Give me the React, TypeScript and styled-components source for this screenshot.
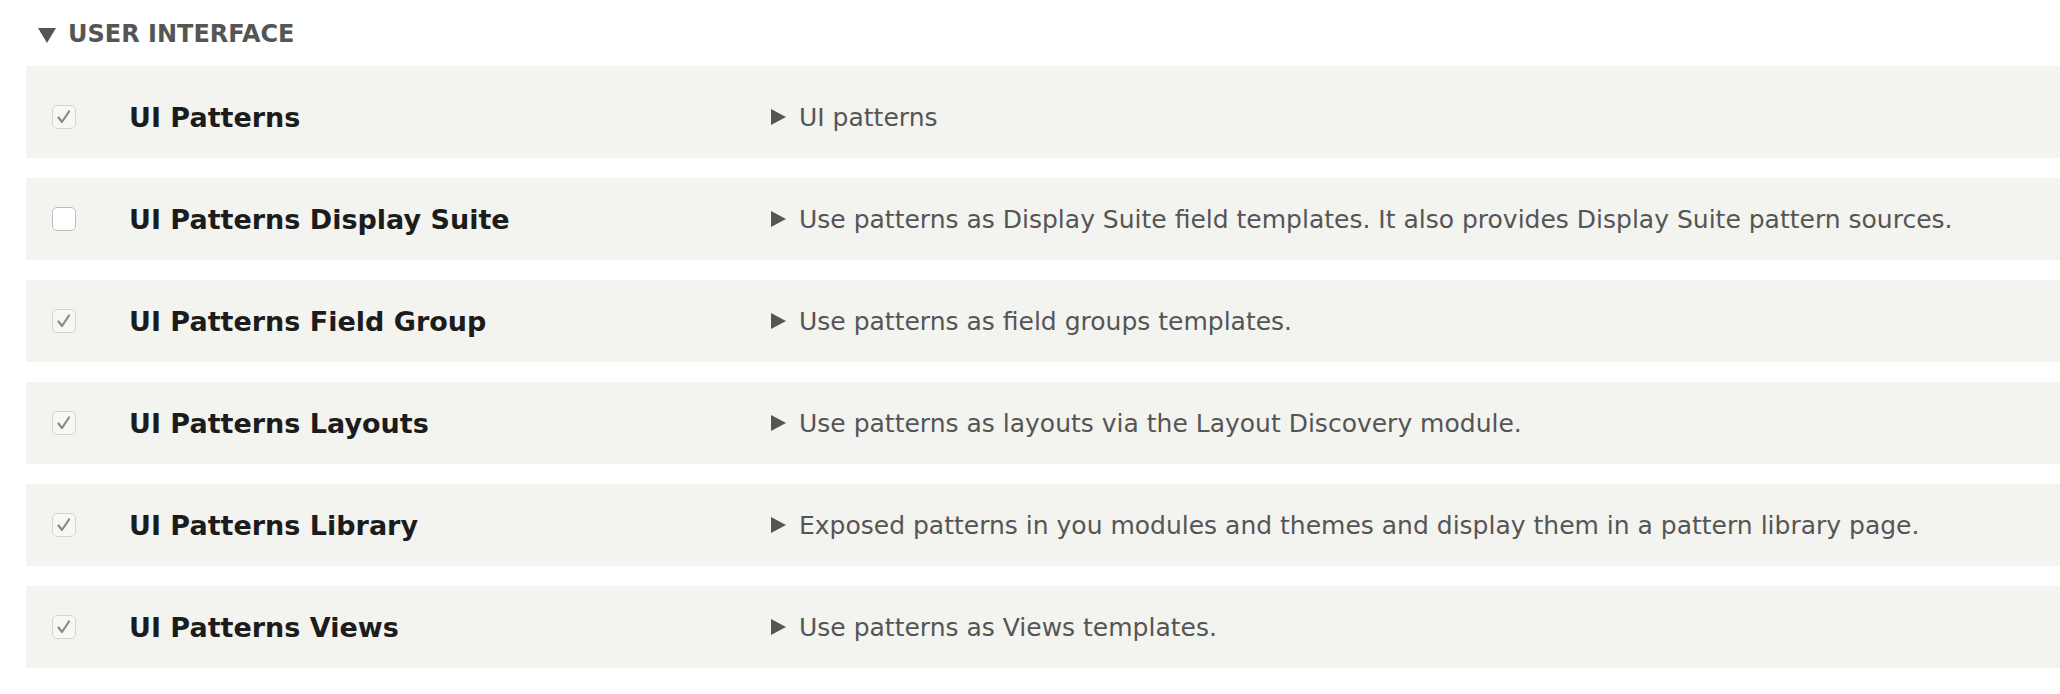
import React from 'react';
import styled, { createGlobalStyle } from 'styled-components';

const GlobalStyle = createGlobalStyle`
  html, body {
    margin: 0;
    padding: 0;
    background: #fff;
  }
  body {
    font-family: "DejaVu Sans", "Liberation Sans", sans-serif;
    -webkit-font-smoothing: antialiased;
  }
`;

type Module = {
  name: string;
  description: string;
  enabled: boolean;
};

const modules: Module[] = [
  { name: 'UI Patterns', description: 'UI patterns', enabled: true },
  {
    name: 'UI Patterns Display Suite',
    description: 'Use patterns as Display Suite field templates. It also provides Display Suite pattern sources.',
    enabled: false,
  },
  { name: 'UI Patterns Field Group', description: 'Use patterns as field groups templates.', enabled: true },
  { name: 'UI Patterns Layouts', description: 'Use patterns as layouts via the Layout Discovery module.', enabled: true },
  {
    name: 'UI Patterns Library',
    description: 'Exposed patterns in you modules and themes and display them in a pattern library page.',
    enabled: true,
  },
  { name: 'UI Patterns Views', description: 'Use patterns as Views templates.', enabled: true },
];

const Page = styled.div`
  padding: 12px 0 0 26px;
  overflow: hidden;
`;

const Summary = styled.div`
  display: flex;
  align-items: center;
  height: 44px;
  padding-left: 12px;
  margin-bottom: 10px;
  color: #555;
  font-weight: bold;
  font-size: 24px;
  text-transform: uppercase;
`;

const DownArrow = styled.span`
  width: 0;
  height: 0;
  border-left: 9px solid transparent;
  border-right: 9px solid transparent;
  border-top: 15px solid #555;
  margin-right: 12px;
  margin-top: 2px;
`;

const List = styled.div`
  display: flex;
  flex-direction: column;
  gap: 20px;
`;

const Row = styled.div<{ $first?: boolean }>`
  display: grid;
  grid-template-columns: 103px 642px 1fr;
  align-items: center;
  background: #f3f3ef;
  height: ${(p) => (p.$first ? 92 : 82)}px;
  box-sizing: border-box;
  padding-top: ${(p) => (p.$first ? 10 : 0)}px;
`;

const CheckCell = styled.div`
  padding-left: 26px;
  display: flex;
  align-items: center;
`;

const Box = styled.span<{ $checked: boolean }>`
  width: 24px;
  height: 24px;
  box-sizing: border-box;
  border: 1.5px solid ${(p) => (p.$checked ? '#d3d3d1' : '#bdbdbb')};
  border-radius: 5px;
  background: ${(p) => (p.$checked ? '#f7f7f5' : '#fff')};
  display: flex;
  align-items: center;
  justify-content: center;
`;

const Title = styled.div`
  font-weight: bold;
  font-size: 27px;
  color: #1c1c1c;
  white-space: nowrap;
`;

const Description = styled.div`
  display: flex;
  align-items: center;
  font-size: 25px;
  color: #555;
  white-space: nowrap;
`;

const RightArrow = styled.span`
  width: 0;
  height: 0;
  border-top: 8px solid transparent;
  border-bottom: 8px solid transparent;
  border-left: 15px solid #555;
  margin-right: 13px;
`;

const Check = () => (
  <svg width="18" height="16" viewBox="0 0 18 16">
    <path d="M3.5 8.5 L7 13 L14 2.5" fill="none" stroke="#8a8a8a" strokeWidth="2.2" strokeLinecap="round" strokeLinejoin="round" />
  </svg>
);

const App: React.FC = () => {
  return (
    <>
      <GlobalStyle />
      <Page>
        <Summary>
          <DownArrow />
          User interface
        </Summary>
        <List>
          {modules.map((m, i) => (
            <Row key={m.name} $first={i === 0}>
              <CheckCell>
                <Box $checked={m.enabled}>{m.enabled && <Check />}</Box>
              </CheckCell>
              <Title>{m.name}</Title>
              <Description>
                <RightArrow />
                {m.description}
              </Description>
            </Row>
          ))}
        </List>
      </Page>
    </>
  );
};

export default App;
